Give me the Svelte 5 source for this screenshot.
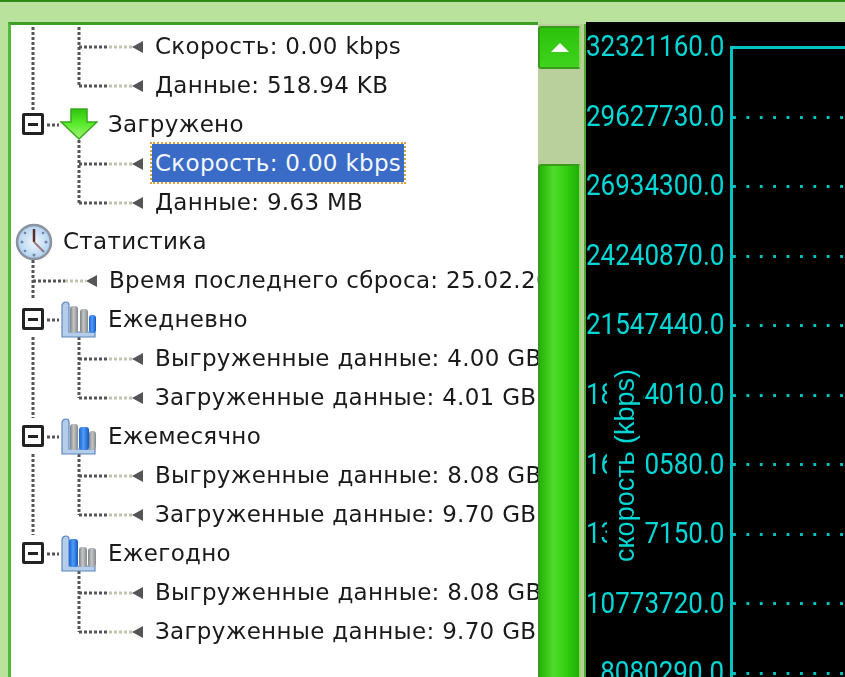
<script>
  const yTicks = ['32321160.0', '29627730.0', '26934300.0', '24240870.0', '21547440.0', '18854010.0', '16160580.0', '13467150.0', '10773720.0', '8080290.0'];

  // each bar: x, top, width, blue or not
  const daily = [[10, 5, 8], [20, 8, 8], [29, 14, 7, true]];
  const monthly = [[10, 6, 8], [19, 9, 10, true], [29, 13, 7]];
  const yearly = [[9, 4, 9, true], [19, 12, 8], [28, 13, 8]];

  const rows = [
    { text: 'Скорость: 0.00 kbps', level: 2 },
    { text: 'Данные: 518.94 KB', level: 2 },
    { text: 'Загружено', level: 1, icon: 'arrow', box: true },
    { text: 'Скорость: 0.00 kbps', level: 2, selected: true },
    { text: 'Данные: 9.63 MB', level: 2 },
    { text: 'Статистика', level: 0, icon: 'clock' },
    { text: 'Время последнего сброса: 25.02.20', level: 1 },
    { text: 'Ежедневно', level: 1, icon: 'bars', bars: daily, box: true },
    { text: 'Выгруженные данные: 4.00 GB', level: 2 },
    { text: 'Загруженные данные: 4.01 GB', level: 2 },
    { text: 'Ежемесячно', level: 1, icon: 'bars', bars: monthly, box: true },
    { text: 'Выгруженные данные: 8.08 GB', level: 2 },
    { text: 'Загруженные данные: 9.70 GB', level: 2 },
    { text: 'Ежегодно', level: 1, icon: 'bars', bars: yearly, box: true },
    { text: 'Выгруженные данные: 8.08 GB', level: 2 },
    { text: 'Загруженные данные: 9.70 GB', level: 2 }
  ];

  // tree connectors, in the tree panel's own coordinates
  const vertical = [
    [22, 0, 85], [68, 0, 59], [68, 113, 176], [22, 233, 273], [68, 310, 371],
    [22, 310, 391], [68, 427, 488], [22, 427, 508], [68, 544, 605]
  ];
  const across = [20, 59, 137, 176, 332, 371, 449, 488, 566, 605];
  const stubs = [98, 293, 410, 527];
</script>

<div class="window">
  <div class="strip"></div>
  <div class="panes">
    <div class="tree-pane">
      <div class="tree">
        <svg class="lines" width="528" height="651">
          {#each vertical as [x, y1, y2]}
            <line x1={x} x2={x} {y1} {y2} class="dots dark" />
          {/each}
          {#each across as y}
            <line x1="68" x2="98" y1={y} y2={y} class="dots dark" />
            <line x1="98" x2="121" y1={y} y2={y} class="dots pale" />
          {/each}
          <line x1="22" x2="54" y1="254" y2="254" class="dots dark" />
          <line x1="54" x2="75" y1="254" y2="254" class="dots pale" />
          {#each stubs as y}
            <line x1="36" x2="48" y1={y} y2={y} class="dots dark" />
          {/each}
        </svg>

        {#each rows as row}
          <div class="row level-{row.level}">
            {#if row.box}
              <span class="box"><span class="minus"></span></span>
            {/if}
            {#if row.icon === 'arrow'}
              <svg class="icon" width="38" height="33" viewBox="0 0 38 33">
                <defs>
                  <linearGradient id="arrowFill" x1="0" y1="0" x2="0" y2="1">
                    <stop offset="0" stop-color="#2fc40f" />
                    <stop offset="0.5" stop-color="#58ec2c" />
                    <stop offset="1" stop-color="#a5f07c" />
                  </linearGradient>
                </defs>
                <path d="M11 1H27V14H37L19 31L1 14H11Z" fill="url(#arrowFill)" stroke="#3aa81c" stroke-width="1.5" />
              </svg>
            {:else if row.icon === 'clock'}
              <svg class="icon" width="38" height="38" viewBox="0 0 38 38">
                <defs>
                  <radialGradient id="face" cx="0.5" cy="0.5" r="0.55">
                    <stop offset="0" stop-color="#eef6fd" />
                    <stop offset="0.75" stop-color="#bcd8f2" />
                    <stop offset="1" stop-color="#8fb2d6" />
                  </radialGradient>
                </defs>
                <circle cx="19" cy="19" r="17" fill="url(#face)" stroke="#8b93a0" stroke-width="2.5" />
                <path d="M19 19V6" stroke="#5a2f2a" stroke-width="2.5" />
                <path d="M19 19L29 29" stroke="#9a7a78" stroke-width="2" />
                <circle cx="7" cy="19" r="1.5" fill="#6d87a5" />
                <circle cx="31" cy="19" r="1.5" fill="#6d87a5" />
                <circle cx="19" cy="32" r="1.5" fill="#6d87a5" />
                <circle cx="10" cy="10" r="1.3" fill="#6d87a5" />
                <circle cx="28" cy="10" r="1.3" fill="#6d87a5" />
                <circle cx="10" cy="28" r="1.3" fill="#6d87a5" />
                <circle cx="28" cy="28" r="1.3" fill="#6d87a5" />
              </svg>
            {:else if row.icon === 'bars'}
              <svg class="icon" width="38" height="38" viewBox="0 0 38 38">
                <defs>
                  <linearGradient id="grayBar">
                    <stop offset="0" stop-color="#7e8285" />
                    <stop offset="0.45" stop-color="#c4c6c6" />
                    <stop offset="1" stop-color="#85898c" />
                  </linearGradient>
                  <linearGradient id="blueBar">
                    <stop offset="0" stop-color="#1a62d8" />
                    <stop offset="0.45" stop-color="#4f9cf5" />
                    <stop offset="1" stop-color="#1757c4" />
                  </linearGradient>
                </defs>
                <path d="M2 4Q3 1 6 1Q9 1 9 4V31H35V36H2Z" fill="#b4cdea" stroke="#5f86bd" stroke-width="1.2" />
                {#each row.bars as [x, top, width, blue]}
                  <rect {x} y={top} {width} height={32 - top} rx="3" fill={blue ? 'url(#blueBar)' : 'url(#grayBar)'} />
                {/each}
              </svg>
            {:else if row.level > 0}
              <span class="pointer"></span>
            {/if}
            <span class="label" class:selected={row.selected}>{row.text}</span>
          </div>
        {/each}
      </div>
    </div>

    <div class="scrollbar">
      <div class="button">
        <span class="up"></span>
      </div>
      <div class="track"></div>
      <div class="thumb"></div>
    </div>

    <div class="chart">
      <div class="ticks">
        {#each yTicks as tick}
          <div class="tick">{tick}</div>
        {/each}
      </div>
      <div class="plot">
        {#each yTicks as _, i}
          <div class="grid" class:first={i === 0}></div>
        {/each}
      </div>
      <div class="axis-title">скорость (kbps)</div>
    </div>
  </div>
</div>

<style>
  :global(body) {
    margin: 0;
    background: #b9e29c;
  }

  .window {
    width: 845px;
    height: 677px;
    overflow: hidden;
    display: flex;
    flex-direction: column;
    background: #b9e29c;
  }

  .strip {
    height: 2px;
    flex: none;
    margin-bottom: 20px;
    background: #2f8a1a;
  }

  .panes {
    flex: 1;
    min-height: 0;
    display: flex;
    padding-left: 8px;
  }

  .tree-pane {
    width: 530px;
    flex: none;
    border-top: 3px solid #3f9f24;
    border-left: 3px solid #56b83a;
    background: #fff;
    overflow: hidden;
    box-sizing: border-box;
    padding-top: 2px;
  }

  .tree {
    position: relative;
    height: 651px;
    font-family: "DejaVu Sans", sans-serif;
    font-size: 23px;
    color: #1a1a1a;
    filter: blur(0.7px);
  }

  .lines {
    position: absolute;
    top: 0;
    left: 0;
  }

  .dots {
    stroke-width: 3;
    stroke-dasharray: 3 2;
  }

  .dark { stroke: #555; }
  .pale { stroke: #c2c4b0; }

  .row {
    position: relative;
    height: 39px;
    display: flex;
    align-items: center;
    white-space: nowrap;
    box-sizing: border-box;
  }

  .level-0 { padding-left: 4px; }
  .level-1 { padding-left: 49px; }
  .level-2 { padding-left: 121px; }

  .box {
    position: absolute;
    left: 11px;
    top: 8px;
    width: 22px;
    height: 22px;
    box-sizing: border-box;
    border: 3px solid #222;
    border-radius: 2px;
    background: #fff;
    display: flex;
    align-items: center;
    justify-content: center;
  }

  .minus {
    width: 10px;
    height: 3px;
    background: #222;
  }

  .icon {
    flex: none;
    margin-right: 10px;
  }

  .pointer {
    flex: none;
    width: 0;
    height: 0;
    margin-right: 12px;
    border-top: 6px solid transparent;
    border-bottom: 6px solid transparent;
    border-right: 11px solid #555;
  }

  .level-1 .pointer {
    margin-left: 26px;
  }

  .label {
    letter-spacing: 0.3px;
    margin-top: -2px;
  }

  .label.selected {
    background: #3a6bc6;
    color: #f4f8ff;
    outline: 2px dotted #e0a040;
    padding: 6px 3px;
    margin-left: -3px;
  }

  .scrollbar {
    width: 48px;
    flex: none;
    display: flex;
    flex-direction: column;
    background: #b9d09c;
    box-sizing: border-box;
    padding-right: 3px;
    border-right: 2px solid #4fa92f;
    margin-top: 2px;
  }

  .button {
    height: 43px;
    flex: none;
    margin-top: 2px;
    box-sizing: border-box;
    border: 2px solid #3a9a1c;
    border-right-color: #8ed86a;
    border-radius: 3px;
    background: linear-gradient(to bottom, #2cc20c, #3fd31d);
    display: flex;
    align-items: center;
    justify-content: center;
  }

  .up {
    width: 0;
    height: 0;
    border-left: 9px solid transparent;
    border-right: 9px solid transparent;
    border-bottom: 9px solid #fff;
  }

  .track {
    height: 95px;
    flex: none;
  }

  .thumb {
    flex: 1;
    box-sizing: border-box;
    border: 2px solid #3a9a1c;
    border-right-color: #8ed86a;
    border-bottom: 0;
    border-radius: 3px 3px 0 0;
    background: linear-gradient(to right, #28b408, #4fdc2a 35%, #35d012 65%, #1fae06);
  }

  .chart {
    position: relative;
    flex: 1;
    min-width: 0;
    display: flex;
    background: #000;
    overflow: hidden;
    color: #00d8d8;
  }

  .ticks {
    width: 138px;
    flex: none;
    padding-top: 7px;
    display: flex;
    flex-direction: column;
    font-family: "Roboto", sans-serif;
    font-weight: 400;
    font-size: 26px;
    filter: blur(0.4px);
  }

  .tick {
    height: 69.6px;
    flex: none;
    line-height: 34px;
    text-align: right;
    white-space: nowrap;
    transform: scaleY(1.15);
    transform-origin: right 17px;
  }

  .plot {
    flex: 1;
    margin-left: 6px;
    margin-top: 24px;
    border-left: 3px solid #00c4c4;
  }

  .grid {
    height: 69.5px;
    box-sizing: border-box;
    background-image: linear-gradient(to right, #00c4c4 3px, transparent 3px);
    background-size: 13.4px 3px;
    background-repeat: repeat-x;
  }

  .grid.first {
    background-image: linear-gradient(#00c4c4, #00c4c4);
    background-size: 100% 3px;
  }

  .axis-title {
    position: absolute;
    left: 21px;
    top: 347px;
    width: 36px;
    height: 192px;
    box-sizing: border-box;
    background: #000;
    writing-mode: vertical-rl;
    transform: rotate(180deg);
    display: flex;
    align-items: center;
    justify-content: center;
    font-family: "Liberation Sans", sans-serif;
    font-size: 27px;
    white-space: nowrap;
  }
</style>
